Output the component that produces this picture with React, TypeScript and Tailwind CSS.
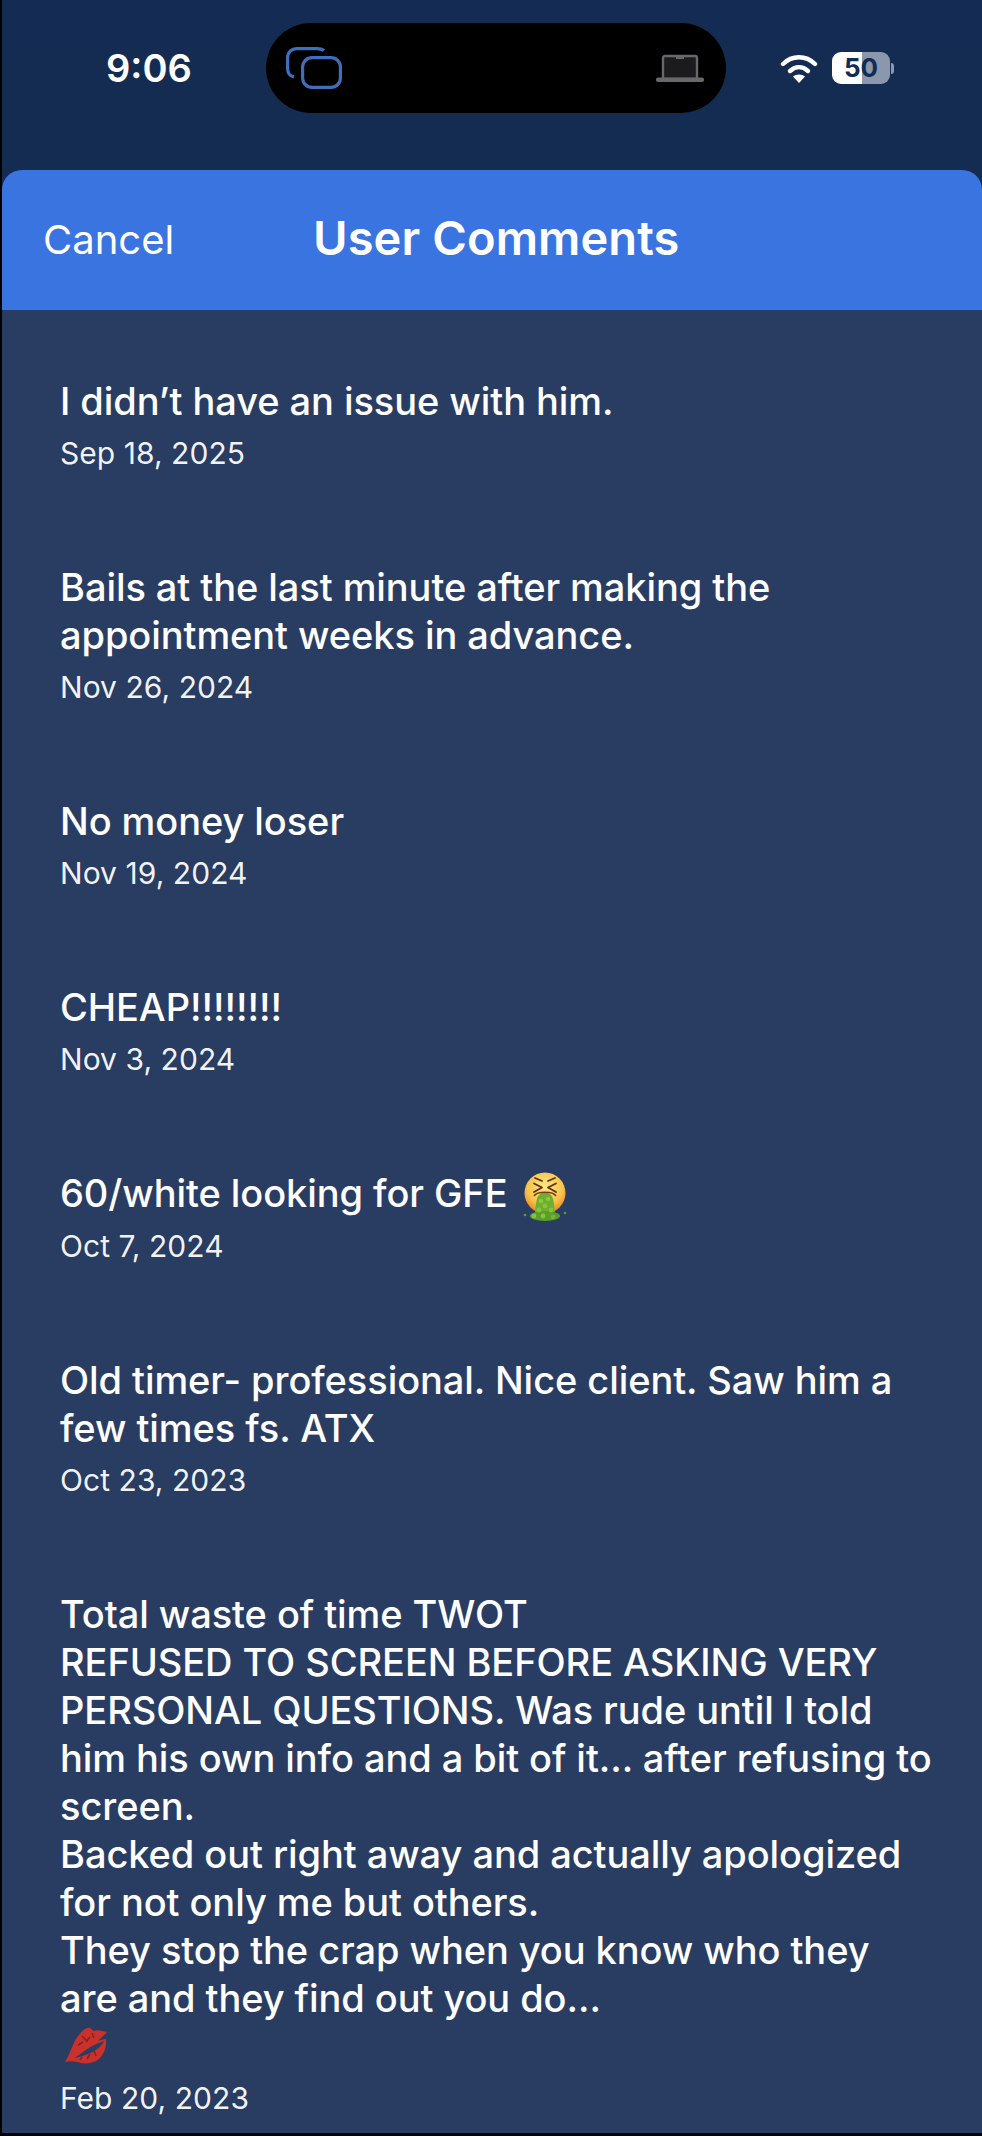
import React from "react";

function SickEmoji() {
  return (
    <svg viewBox="0 0 46 50" className="inline-block w-[46px] h-[50px] ml-[14px] -my-[4px] align-[-11px]">
      <defs>
        <radialGradient id="f" cx="50%" cy="35%" r="62%">
          <stop offset="0%" stopColor="#fde88a" />
          <stop offset="70%" stopColor="#f8c34a" />
          <stop offset="100%" stopColor="#ea8f2a" />
        </radialGradient>
      </defs>
      <circle cx="23" cy="21" r="20.5" fill="url(#f)" />
      <path d="M13 6l7 3M33 6l-7 3M12 20l8-4.5-8-4M34 20l-8-4.5 8-4" fill="none" stroke="#5a3410" strokeWidth="1.8" strokeLinecap="round" strokeLinejoin="round" />
      <path d="M13 40c1-6 1-14 4-17 2-3 10-3 12 0 3 3 3 11 4 17z" fill="#6fae2e" />
      <path d="M12 24c3-5 19-5 22 0" fill="none" stroke="#7a3b12" strokeWidth="1.5" />
      <ellipse cx="23" cy="44" rx="15" ry="5" fill="#5f9e26" />
      <circle cx="19" cy="29" r="2.2" fill="#8bca44" />
      <circle cx="26" cy="27" r="2.2" fill="#8bca44" />
      <circle cx="23" cy="34" r="2.4" fill="#86c43f" />
      <circle cx="17" cy="38" r="2.4" fill="#86c43f" />
      <circle cx="29" cy="38" r="2.4" fill="#86c43f" />
      <circle cx="12" cy="44" r="2.4" fill="#86c43f" />
      <circle cx="21" cy="44" r="2.4" fill="#86c43f" />
      <circle cx="31" cy="45" r="2.2" fill="#78b535" />
      <circle cx="3" cy="43" r="1.3" fill="#5f9e26" />
      <circle cx="43" cy="41" r="1.3" fill="#5f9e26" />
    </svg>
  );
}

function Lips() {
  return (
    <div className="h-[48px] flex items-center pl-[5px]">
      <svg viewBox="0 0 42 38" className="block w-[42px] h-[38px]">
        <path d="M0 35C5 28 8 15 13 9c4-5 8-9 12-8 2 1 3 3 4 3 3-2 8 0 13 1-3 3-6 6-9 9 3-1 6-2 8-2 1 9-3 18-10 22-6 3-13 3-19 1-4-1-8-1-12 0z" fill="#c9322c" />
        <path d="M9 31c7-3 12-11 30-17-3 7-12 12-19 14-4 2-7 2-11 3z" fill="#2a3e64" />
        <path d="M17 9l5 5M27 6l2 5M13 18l5-3M21 15l4-5M22 32l3-5M31 29l-2-5M15 33l2-3" stroke="#8e1f1c" strokeWidth="1.6" />
      </svg>
    </div>
  );
}

function Comment({ children, date, className }: { children: React.ReactNode; date: string; className: string }) {
  return (
    <div className={className}>
      <div className="text-[38px] leading-[48px] tracking-[-0.07px] font-medium text-white">{children}</div>
      <div className="text-[30px] leading-[44px] mt-[6px] tracking-[0.05px] text-white/95">{date}</div>
    </div>
  );
}

export default function App() {
  return (
    <div className="w-[982px] h-[2136px] overflow-hidden bg-black font-['Inter','Liberation_Sans',sans-serif]">
      <div className="w-[980px] ml-[2px] h-[2133px] flex flex-col bg-gradient-to-b from-[#142c53] to-[#14294a]">
        <div className="h-[170px] shrink-0 flex items-start">
          <div className="w-[264px] pt-[44px] pl-[104px] text-[38px] leading-[48px] font-semibold text-white">9:06</div>
          <div className="w-[460px] h-[90px] mt-[23px] rounded-[45px] bg-black flex items-center justify-between pl-[20px] pr-[22px] shrink-0">
            <svg viewBox="0 0 56 42" className="w-[56px] h-[42px]" fill="none" stroke="#3f6fbc" strokeWidth="3.2">
              <path d="M38 3.5C36 2 34 1.6 31 1.6H11C5.5 1.6 1.6 5.5 1.6 11V22c0 4 2.5 7 6.4 8" />
              <rect x="16.6" y="10.6" width="37.8" height="29.8" rx="9.5" />
            </svg>
            <svg viewBox="0 0 48 28" className="w-[48px] h-[28px]">
              <path d="M9 2h30a2 2 0 0 1 2 2v21H7V4a2 2 0 0 1 2-2z" fill="#1b1b1d" stroke="#67686b" strokeWidth="2.4" />
              <rect x="0" y="23.5" width="48" height="4.5" rx="2" fill="#67686b" />
              <rect x="20" y="2" width="8" height="3" fill="#67686b" />
            </svg>
          </div>
          <div className="flex items-center pt-[52px] pl-[54px] gap-[14px]">
            <svg viewBox="0 0 38 29" className="w-[38px] h-[29px]" fill="none" stroke="#fff" strokeWidth="4.4" strokeLinecap="round">
              <path d="M3 10C12 1 26 1 35 10" />
              <path d="M10 17c5.500-5 12.500-5 18 0" />
              <path d="M19 29l-6-6.500c3-2.800 9-2.800 12 0z" fill="#fff" stroke="none" />
            </svg>
            <div className="flex items-center">
              <div className="w-[58px] h-[32px] rounded-[9px] overflow-hidden bg-gradient-to-r from-white from-[52%] to-[#8b97ab] to-[52%] flex items-center justify-center text-[26px] leading-none font-bold text-[#142c53]">50</div>
              <div className="w-[3px] h-[11px] ml-[1px] rounded-r-[3px] bg-[#8b97ab]" />
            </div>
          </div>
        </div>
        <div className="flex-1 flex flex-col rounded-t-[20px] overflow-hidden bg-[#293d63]">
          <div className="h-[140px] shrink-0 bg-[#3a74e0] flex items-center text-white">
            <span className="w-[311px] pl-[41px] text-[40px] font-normal">Cancel</span>
            <span className="text-[47px] font-semibold tracking-[0.1px] -mt-[4px]">User Comments</span>
          </div>
          <div className="flex flex-col pl-[58px] pr-[30px] pt-[67px]">
            <Comment className="mb-[88px]" date="Sep 18, 2025">I didn’t have an issue with him.</Comment>
            <Comment className="mb-[88px]" date="Nov 26, 2024">Bails at the last minute after making the<br />appointment weeks in advance.</Comment>
            <Comment className="mb-[88px]" date="Nov 19, 2024">No money loser</Comment>
            <Comment className="mb-[88px]" date="Nov 3, 2024">CHEAP!!!!!!!!</Comment>
            <Comment className="mb-[88px]" date="Oct 7, 2024">60/white looking for GFE<SickEmoji /></Comment>
            <Comment className="mb-[88px]" date="Oct 23, 2023">Old timer- professional. Nice client. Saw him a<br />few times fs. ATX</Comment>
            <Comment className="" date="Feb 20, 2023">
              Total waste of time TWOT<br />
              REFUSED TO SCREEN BEFORE ASKING VERY<br />
              PERSONAL QUESTIONS. Was rude until I told<br />
              him his own info and a bit of it... after refusing to<br />
              screen.<br />
              Backed out right away and actually apologized<br />
              for not only me but others.<br />
              They stop the crap when you know who they<br />
              are and they find out you do...<br />
              <Lips />
            </Comment>
          </div>
        </div>
      </div>
    </div>
  );
}
